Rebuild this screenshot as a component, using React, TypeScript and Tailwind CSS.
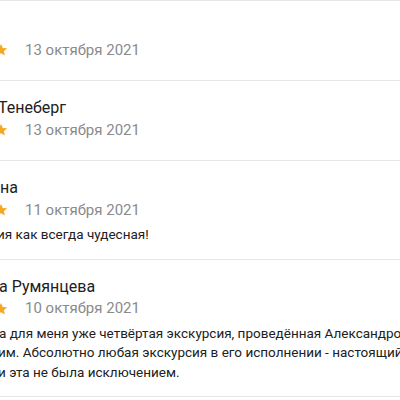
const reviews = [
  { name: "", date: "13 октября 2021", nameShift: "ml-0", lines: [] as { text: string; shift: string }[] },
  { name: "Тенеберг", date: "13 октября 2021", nameShift: "-ml-[2px]", lines: [] },
  {
    name: "на",
    date: "11 октября 2021",
    nameShift: "ml-0",
    lines: [{ text: "ия как всегда чудесная!", shift: "-ml-[3px]" }],
  },
  {
    name: "а Румянцева",
    date: "10 октября 2021",
    nameShift: "-ml-[1px]",
    lines: [
      { text: "а для меня уже четвёртая экскурсия, проведённая Александром ещё", shift: "-ml-[1px]" },
      { text: "им. Абсолютно любая экскурсия в его исполнении - настоящий праздник", shift: "-ml-[2px]" },
      { text: "и эта не была исключением.", shift: "-ml-[2px]" },
    ],
  },
]

function Star() {
  return (
    <svg width="14" height="14" viewBox="0 0 24 24" className="shrink-0">
      <path
        d="M12 1.5l3.1 6.9 7.4.7-5.6 5 1.7 7.4L12 17.6l-6.6 3.9 1.7-7.4-5.6-5 7.4-.7z"
        fill="#F7A823"
      />
    </svg>
  )
}

export default function App() {
  return (
    <div className="w-[400px] h-[400px] overflow-hidden bg-white font-['Roboto',sans-serif]">
      <div className="border-t border-[#e6e6e6]">
        {reviews.map((r, i) => (
          <div key={i} className={`border-b border-[#e6e6e6] pt-[15px] ${r.lines.length ? "pb-[14px]" : "pb-[20px]"}`}>
            <div className={`h-6 leading-6 text-[16px] text-[#212121] whitespace-nowrap ${r.nameShift}`}>{r.name}</div>
            <div className="h-5 flex items-center whitespace-nowrap">
              <div className="flex items-center gap-[2px] -ml-[70px]">
                <Star />
                <Star />
                <Star />
                <Star />
                <Star />
              </div>
              <span className="ml-[17px] text-[15px] text-[#8a8a8a]">{r.date}</span>
            </div>
            {r.lines.length > 0 && (
              <div className="mt-[5px] text-[13.5px] leading-[19.5px] text-[#212121]">
                {r.lines.map((l, j) => (
                  <div key={j} className={`whitespace-nowrap ${l.shift}`}>
                    {l.text}
                  </div>
                ))}
              </div>
            )}
          </div>
        ))}
      </div>
    </div>
  )
}
